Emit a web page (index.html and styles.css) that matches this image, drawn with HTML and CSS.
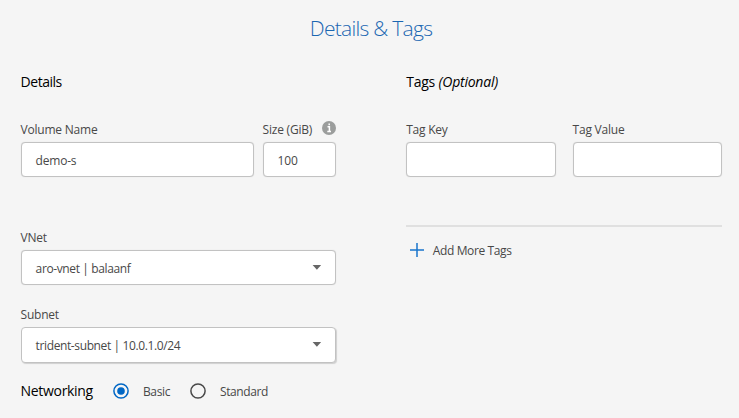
FILE: index.html
```html
<!DOCTYPE html>
<html lang="en">
<head>
<meta charset="utf-8">
<title>Details &amp; Tags</title>
<link rel="stylesheet" href="styles.css">
</head>
<body>
<h1>Details &amp; Tags</h1>
<main>
  <section class="details">
    <h2 class="tight">Details</h2>
    <div class="row">
      <div class="field name"><label>Volume Name</label><div class="box short">demo-s</div></div>
      <div class="field size"><label>Size (GiB)<svg class="info" viewBox="0 0 14 14"><circle cx="7" cy="7" r="7"/><path d="M5.5 5.8H7.4V10M5.3 10.4H9M7.2 2.6V4.3"/></svg></label><div class="box short">100</div></div>
    </div>
    <div class="field vnet"><label>VNet</label><div class="box select">aro-vnet | balaanf<i class="caret"></i></div></div>
    <div class="field subnet"><label>Subnet</label><div class="box select">trident-subnet | 10.0.1.0/24<i class="caret"></i></div></div>
    <div class="network">
      <span class="title">Networking</span>
      <svg class="radio on" viewBox="0 0 16 16"><circle cx="8" cy="8" r="7.1"/><circle class="dot" cx="8" cy="8" r="3.8"/></svg>
      <span class="basic">Basic</span>
      <svg class="radio" viewBox="0 0 16 16"><circle cx="8" cy="8" r="7.1"/></svg>
      <span class="standard">Standard</span>
    </div>
  </section>
  <section class="tags">
    <h2>Tags <em>(Optional)</em></h2>
    <div class="row">
      <div class="field"><label>Tag Key</label><div class="box"></div></div>
      <div class="field"><label>Tag Value</label><div class="box"></div></div>
    </div>
    <div class="add"><svg class="plus" viewBox="0 0 14 14"><path d="M7 0V14M0 7H14"/></svg><span>Add More Tags</span></div>
  </section>
</main>
</body>
</html>
```
FILE: styles.css
```css
* { box-sizing: border-box; }
body { margin: 0; height: 418px; overflow: hidden; background: #f5f5f5; color: #484848; font: 12px/16px "Open Sans", sans-serif; letter-spacing: -.38px; }
h1 { margin: 0; padding: 14px 0 0 3px; height: 73px; text-align: center; font-size: 21px; line-height: 28px; font-weight: 300; letter-spacing: -.72px; color: #1b67b2; }
main { display: flex; gap: 69.8px; padding-left: 20.6px; }
section { width: 315.8px; }
h2 { margin: 0; height: 48px; font-size: 14px; line-height: 18px; font-weight: 400; letter-spacing: -.22px; color: #000; }
.tight { letter-spacing: -.48px; }
.row { display: flex; }
.details .row { gap: 8.4px; height: 108px; }
.tags .row { gap: 17px; height: 106px; border-bottom: 2px solid #e0e0e0; }
.field { flex: 1; }
.name { flex: 0 0 233.6px; }
label { display: flex; height: 20.8px; padding-top: .5px; white-space: nowrap; letter-spacing: -.22px; }
.info { width: 14px; height: 14px; margin: -1px 0 0 10px; fill: #9b9d9c; }
.info path { fill: none; stroke: #fff; stroke-width: 1.5; }
.box { height: 35.6px; padding: 0 14px; border: 1px solid #c2c2c2; border-radius: 4px; background: #fff; line-height: 35px; white-space: nowrap; box-shadow: 0 0 1px #d0d0d0; }
.short { letter-spacing: -.2px; }
.select { display: flex; justify-content: space-between; }
.caret { width: 9px; height: 5px; margin-top: 14px; background: #666; clip-path: polygon(0 0, 100% 0, 50% 100%); }
.vnet, .subnet { height: 77px; }
.subnet .box { height: 36px; box-shadow: 1px 1px 1px #d0d0d0; }
.network { display: flex; align-items: center; height: 18px; margin-top: -1px; }
.title { width: 92.4px; font-size: 14px; letter-spacing: -.32px; color: #000; }
.radio { width: 16px; height: 16px; fill: none; stroke: #484848; stroke-width: 1.5; }
.on { stroke: #0067c5; }
.dot { fill: #0067c5; stroke: none; }
.basic { width: 61px; padding: 1px 0 0 14px; }
.standard { padding: 1px 0 0 14px; }
.add { display: flex; height: 48px; align-items: center; padding-left: 3.6px; gap: 9px; }
.plus { width: 14px; height: 14px; margin-top: -2px; fill: none; stroke: #1874cc; stroke-width: 1.5; }
```
